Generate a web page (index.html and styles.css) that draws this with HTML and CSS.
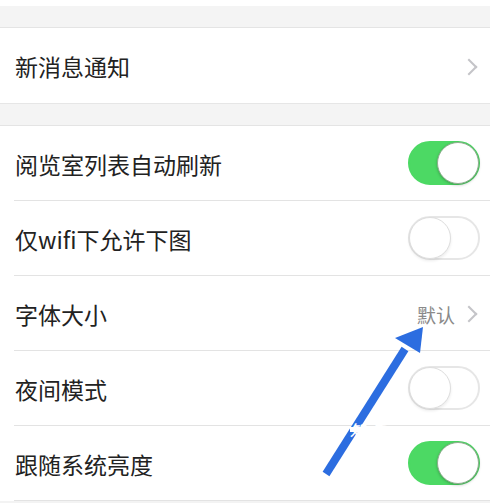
FILE: index.html
```html
<!DOCTYPE html>
<html lang="zh">
<head>
<meta charset="utf-8">
<title>设置</title>
<link rel="stylesheet" href="styles.css">
</head>
<body>
<div class="screen">
  <div class="top-strip"></div>
  <div class="gap"></div>
  <section class="group">
    <div class="row row-single">
      <span class="label">新消息通知</span>
      <span class="chev"></span>
    </div>
  </section>
  <div class="gap gap-b"></div>
  <section class="group">
    <div class="row">
      <span class="label">阅览室列表自动刷新</span>
      <span class="switch on"><span class="knob"></span></span>
    </div>
    <div class="row">
      <span class="label">仅wifi下允许下图</span>
      <span class="switch"><span class="knob"></span></span>
    </div>
    <div class="row">
      <span class="label">字体大小</span>
      <span class="value">默认</span>
      <span class="chev"></span>
    </div>
    <div class="row">
      <span class="label">夜间模式</span>
      <span class="switch"><span class="knob"></span></span>
    </div>
    <div class="row">
      <span class="label">跟随系统亮度</span>
      <span class="switch on"><span class="knob"></span></span>
    </div>
  </section>

  <!-- annotation arrow pointing at the font size value -->
  <svg class="arrow" width="490" height="503" viewBox="0 0 490 503">
    <line x1="326" y1="474" x2="405" y2="349" stroke="#2c6de0" stroke-width="8"/>
    <polygon points="423,327 395,338 420,353" fill="#2c6de0"/>
  </svg>
  <span class="mark">知乎 </span>
</div>
</body>
</html>
```
FILE: styles.css
```css
* { box-sizing: border-box; }
html, body { margin: 0; padding: 0; }
body {
  width: 490px;
  height: 503px;
  overflow: hidden;
  background: #f3f3f3;
  font-family: "Noto Sans CJK SC", "Noto Sans", sans-serif;
}
.screen {
  position: relative;
  width: 490px;
  height: 503px;
  overflow: hidden;
}
.top-strip {
  height: 6px;
  background: #fff;
}
.gap {
  height: 22px;
  background: #f4f4f4;
  border-bottom: 1px solid #e4e4e4;
}
.gap-b {
  height: 23px;
  border-top: 1px solid #e6e6e6;
}
.group {
  background: #fff;
}
.row {
  display: flex;
  align-items: center;
  height: 75px;
  margin-left: 14px;
  padding-right: 10px;
  border-bottom: 1px solid #e3e3e3;
}
.row-single {
  height: 75px;
  border-bottom: none;
}
.label {
  flex: 1;
  margin-left: 1px;
  font-size: 23px;
  color: #222;
  line-height: 1;
  padding-top: 2px;
}
.value {
  font-size: 19px;
  color: #8a8a8a;
  margin-right: 8px;
  padding-top: 2px;
}
.chev {
  width: 12px;
  height: 12px;
  border-top: 2px solid #c4c4c8;
  border-right: 2px solid #c4c4c8;
  transform: rotate(45deg);
  margin-right: 5px;
  margin-top: 2px;
}
.switch {
  position: relative;
  width: 72px;
  height: 44px;
  border-radius: 22px;
  background: #fff;
  border: 2px solid #e6e6e6;
}
.switch .knob {
  position: absolute;
  top: -1px;
  left: -1px;
  width: 42px;
  height: 42px;
  border-radius: 50%;
  background: #fff;
  border: 1px solid #dedede;
  box-shadow: 0 2px 3px rgba(0,0,0,0.08);
}
.switch.on {
  background: #4cd964;
  border-color: #4cd964;
}
.switch.on .knob {
  left: auto;
  right: -1px;
  border: 1px solid #8fae8f;
  box-shadow: 0 1px 3px rgba(0,0,0,0.25);
}
.arrow {
  position: absolute;
  left: 0;
  top: 0;
  pointer-events: none;
}
.mark {
  position: absolute;
  left: 350px;
  top: 419px;
  width: 90px;
  font-size: 15px;
  font-style: italic;
  font-weight: bold;
  color: #fff;
  letter-spacing: 6px;
  background: linear-gradient(#fff0 40%, #fff 40%, #fff 60%, #fff0 60%);
}
```
